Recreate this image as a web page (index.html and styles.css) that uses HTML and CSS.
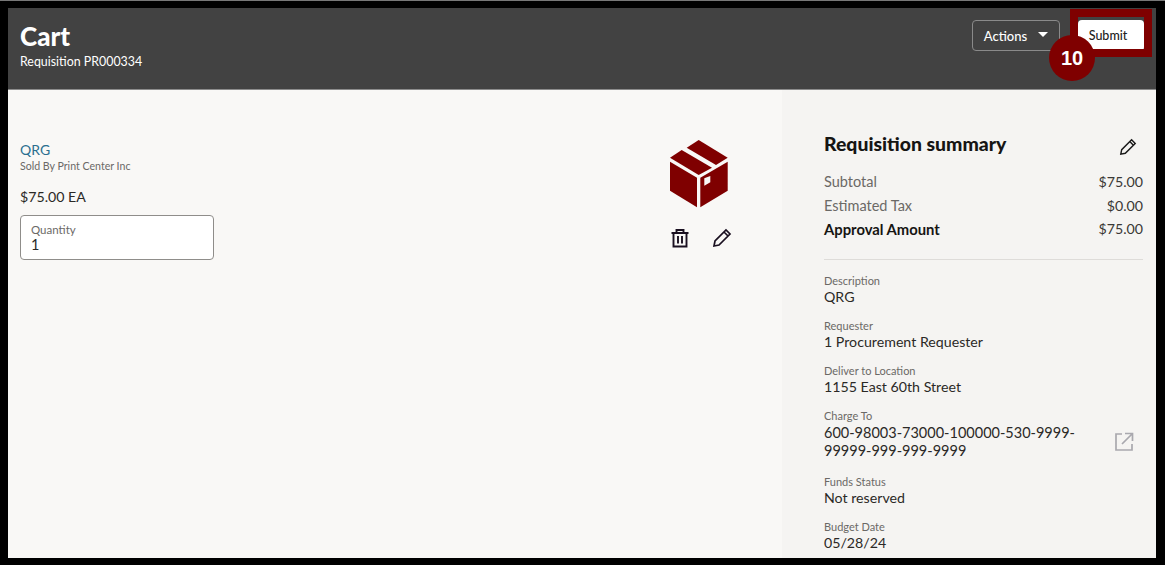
FILE: index.html
```html
<!DOCTYPE html>
<html>
  <head>
    <title>Cart</title>
    <link rel="stylesheet" href="styles.css">
  </head>
  <body>
    <div class="frame">
      <header class="header">
        <div>
          <h1>Cart</h1>
          <p class="subtitle">Requisition PR000334</p>
        </div>
        <div class="header-actions">
          <button class="btn-actions">Actions <span class="caret"></span></button>
          <button class="btn-submit">Submit</button>
        </div>
      </header>

      <div class="content">
        <main class="lines">
          <div class="line-info">
            <a class="item-link">QRG</a>
            <div class="seller">Sold By Print Center Inc</div>
            <div class="price">$75.00 EA</div>
            <div class="quantity">
              <label>Quantity</label>
              <div class="quantity-value">1</div>
            </div>
          </div>
          <div class="line-side">
            <svg class="box-icon" width="58" height="68" viewBox="0 0 58 68">
              <path fill="#7f0000" d="M0 17.700 L11.700 10 L42 27.700 L28.700 35 Z"/>
              <path fill="#7f0000" d="M16.700 7.700 L28.700 0 L57.700 17.700 L46 25 Z"/>
              <path fill="#7f0000" d="M0 21.700 L27 37.700 V67.300 L0 50.700 Z"/>
              <path fill="#7f0000" fill-rule="evenodd" d="M57.700 21.700 L30.300 37.700 V67.300 L57.700 50.700 Z M34.300 38.300 L40.300 36 V42.300 L34.300 45.700 Z"/>
            </svg>
            <div class="line-tools">
              <svg width="20" height="20" viewBox="0 0 20 20" fill="none" stroke="#1a1020" stroke-width="1.9">
                <path d="M1.500 5 H18.500 M6.500 5 V2 H13.500 V5 M3.500 5 V18.500 H16.500 V5"/>
                <path d="M8 8 V15.500 M12 8 V15.500"/>
              </svg>
              <svg width="20" height="20" viewBox="0 0 20 20" fill="none" stroke="#1a1020" stroke-width="1.7">
                <path d="M2 18 L3 13 L14 2 L18 6 L7 17 Z M12 4 L16 8"/>
              </svg>
            </div>
          </div>
        </main>

        <aside class="summary">
          <div class="summary-head">
            <h2>Requisition summary</h2>
            <svg width="18" height="18" viewBox="0 0 20 20" fill="none" stroke="#1a1a1a" stroke-width="1.6">
              <path d="M2 18 L3 13 L14 2 L18 6 L7 17 Z M12 4 L16 8"/>
            </svg>
          </div>
          <div class="totals">
            <div class="total-row"><span>Subtotal</span><span class="amount">$75.00</span></div>
            <div class="total-row"><span>Estimated Tax</span><span class="amount">$0.00</span></div>
            <div class="total-row total-strong"><span>Approval Amount</span><span class="amount">$75.00</span></div>
          </div>
          <div class="field">
            <div class="field-label">Description</div>
            <div class="field-value">QRG</div>
          </div>
          <div class="field">
            <div class="field-label">Requester</div>
            <div class="field-value">1 Procurement Requester</div>
          </div>
          <div class="field">
            <div class="field-label">Deliver to Location</div>
            <div class="field-value">1155 East 60th Street</div>
          </div>
          <div class="field">
            <div class="field-label">Charge To</div>
            <div class="charge-row">
              <div class="field-value charge-value">600-98003-73000-100000-530-9999-99999-999-999-9999</div>
              <svg width="20" height="20" viewBox="0 0 20 20" fill="none" stroke="#a9a8ae" stroke-width="1.7">
                <path d="M8 2 H2 V18 H18 V12 M11 1.500 H18.500 V9 M18 2 L8 12"/>
              </svg>
            </div>
          </div>
          <div class="field">
            <div class="field-label">Funds Status</div>
            <div class="field-value">Not reserved</div>
          </div>
          <div class="field">
            <div class="field-label">Budget Date</div>
            <div class="field-value">05/28/24</div>
          </div>
        </aside>
      </div>

      <div class="callout-box"></div>
      <div class="callout-badge">10</div>
    </div>
  </body>
</html>
```

FILE: styles.css
```css
* {
  box-sizing: border-box;
  margin: 0;
  padding: 0;
  font-family: Lato, "Noto Sans", sans-serif;
}

html,
body {
  height: 100%;
  overflow: hidden;
  background: #000;
}

body {
  border-top: 1px solid #777;
}

.frame {
  position: relative;
  width: 1148px;
  height: 550px;
  margin: 7px 0 0 8px;
  background: #f9f8f6;
  overflow: hidden;
  display: flex;
  flex-direction: column;
}

.header {
  height: 82px;
  flex-shrink: 0;
  background: #424242;
  border-bottom: 1px solid #8c8c8c;
  color: #fff;
  padding: 13px 12px 0;
  display: flex;
  justify-content: space-between;
  align-items: flex-start;
}

h1 {
  font-size: 26px;
  font-weight: 900;
  line-height: 30px;
}

.subtitle {
  font-size: 12.400px;
  line-height: 18px;
  margin-top: 2px;
}

.header-actions {
  display: flex;
  gap: 18px;
  margin-top: -1px;
}

.btn-actions {
  width: 88px;
  height: 31px;
  background: transparent;
  border: 1px solid #8a8a8a;
  border-radius: 4px;
  color: #fff;
  font-size: 13px;
  font-weight: 500;
  display: flex;
  align-items: center;
  justify-content: center;
  gap: 11px;
}

.caret {
  width: 0;
  height: 0;
  border-left: 5px solid transparent;
  border-right: 5px solid transparent;
  border-top: 5px solid #fff;
  margin-top: -2px;
}

.btn-submit {
  width: 66px;
  height: 31px;
  padding-right: 6px;
  background: #fff;
  border: none;
  border-radius: 4px;
  color: #222;
  font-size: 12.500px;
  font-weight: 500;
}

.content {
  flex: 1;
  display: flex;
  min-height: 0;
}

.lines {
  width: 774px;
  padding: 50px 12px 0;
  display: flex;
  justify-content: space-between;
  align-items: flex-start;
}

.line-info {
  width: 194px;
}

.item-link {
  display: block;
  color: #2a6f8f;
  font-size: 14px;
  line-height: 20px;
}

.seller {
  color: #6b6966;
  font-size: 10.600px;
  line-height: 12px;
}

.price {
  color: #2b2926;
  font-size: 14.200px;
  line-height: 20px;
  margin-top: 15px;
}

.quantity {
  height: 45px;
  margin-top: 8px;
  padding: 7px 10px 0;
  background: #fff;
  border: 1px solid #8f8d8a;
  border-radius: 4px;
}

.quantity label {
  display: block;
  color: #6b6966;
  font-size: 11.500px;
  line-height: 14px;
}

.quantity-value {
  color: #2b2926;
  font-size: 14.500px;
  line-height: 16px;
}

.line-side {
  display: flex;
  flex-direction: column;
  align-items: center;
  margin-right: 38px;
}

.line-tools {
  display: flex;
  gap: 22px;
  margin-top: 20px;
  margin-left: 5px;
}

.summary {
  flex: 1;
  background: #f5f4f2;
  padding: 42px 13px 0 42px;
}

.summary-head {
  display: flex;
  justify-content: space-between;
  align-items: center;
  padding-right: 6px;
}

.summary-head svg {
  margin-top: 6px;
}

h2 {
  color: #161513;
  font-size: 19.400px;
  font-weight: 900;
  line-height: 24px;
}

.totals {
  margin-top: 14px;
  padding-bottom: 18px;
  border-bottom: 1px solid #dedcd9;
  margin-bottom: 14px;
}

.total-row {
  display: flex;
  justify-content: space-between;
  color: #6b6966;
  font-size: 14.500px;
  line-height: 24px;
}

.total-strong {
  color: #161513;
  font-weight: 700;
  font-size: 14.800px;
  margin-top: -1px;
}

.amount {
  color: #3a3835;
  font-weight: 400;
  font-size: 14.200px;
}

.field {
  margin-bottom: 13px;
}

.field-label {
  color: #6b6966;
  font-size: 11px;
  line-height: 14px;
}

.field-value {
  color: #2b2926;
  font-size: 14.200px;
  line-height: 18px;
}

.charge-row {
  display: flex;
  justify-content: space-between;
  align-items: center;
  padding: 1px 9px 2px 0;
}

.charge-value {
  width: 262px;
  font-size: 14.500px;
}

.callout-box {
  position: absolute;
  left: 1062px;
  top: 1px;
  width: 82px;
  height: 48px;
  border: 8px solid #7f0000;
}

.callout-badge {
  position: absolute;
  left: 1041px;
  top: 27px;
  width: 46px;
  height: 46px;
  border-radius: 50%;
  background: #7f0000;
  color: #fff;
  font-family: "Liberation Sans", sans-serif;
  font-size: 20px;
  font-weight: 700;
  line-height: 46px;
  text-align: center;
}
```
